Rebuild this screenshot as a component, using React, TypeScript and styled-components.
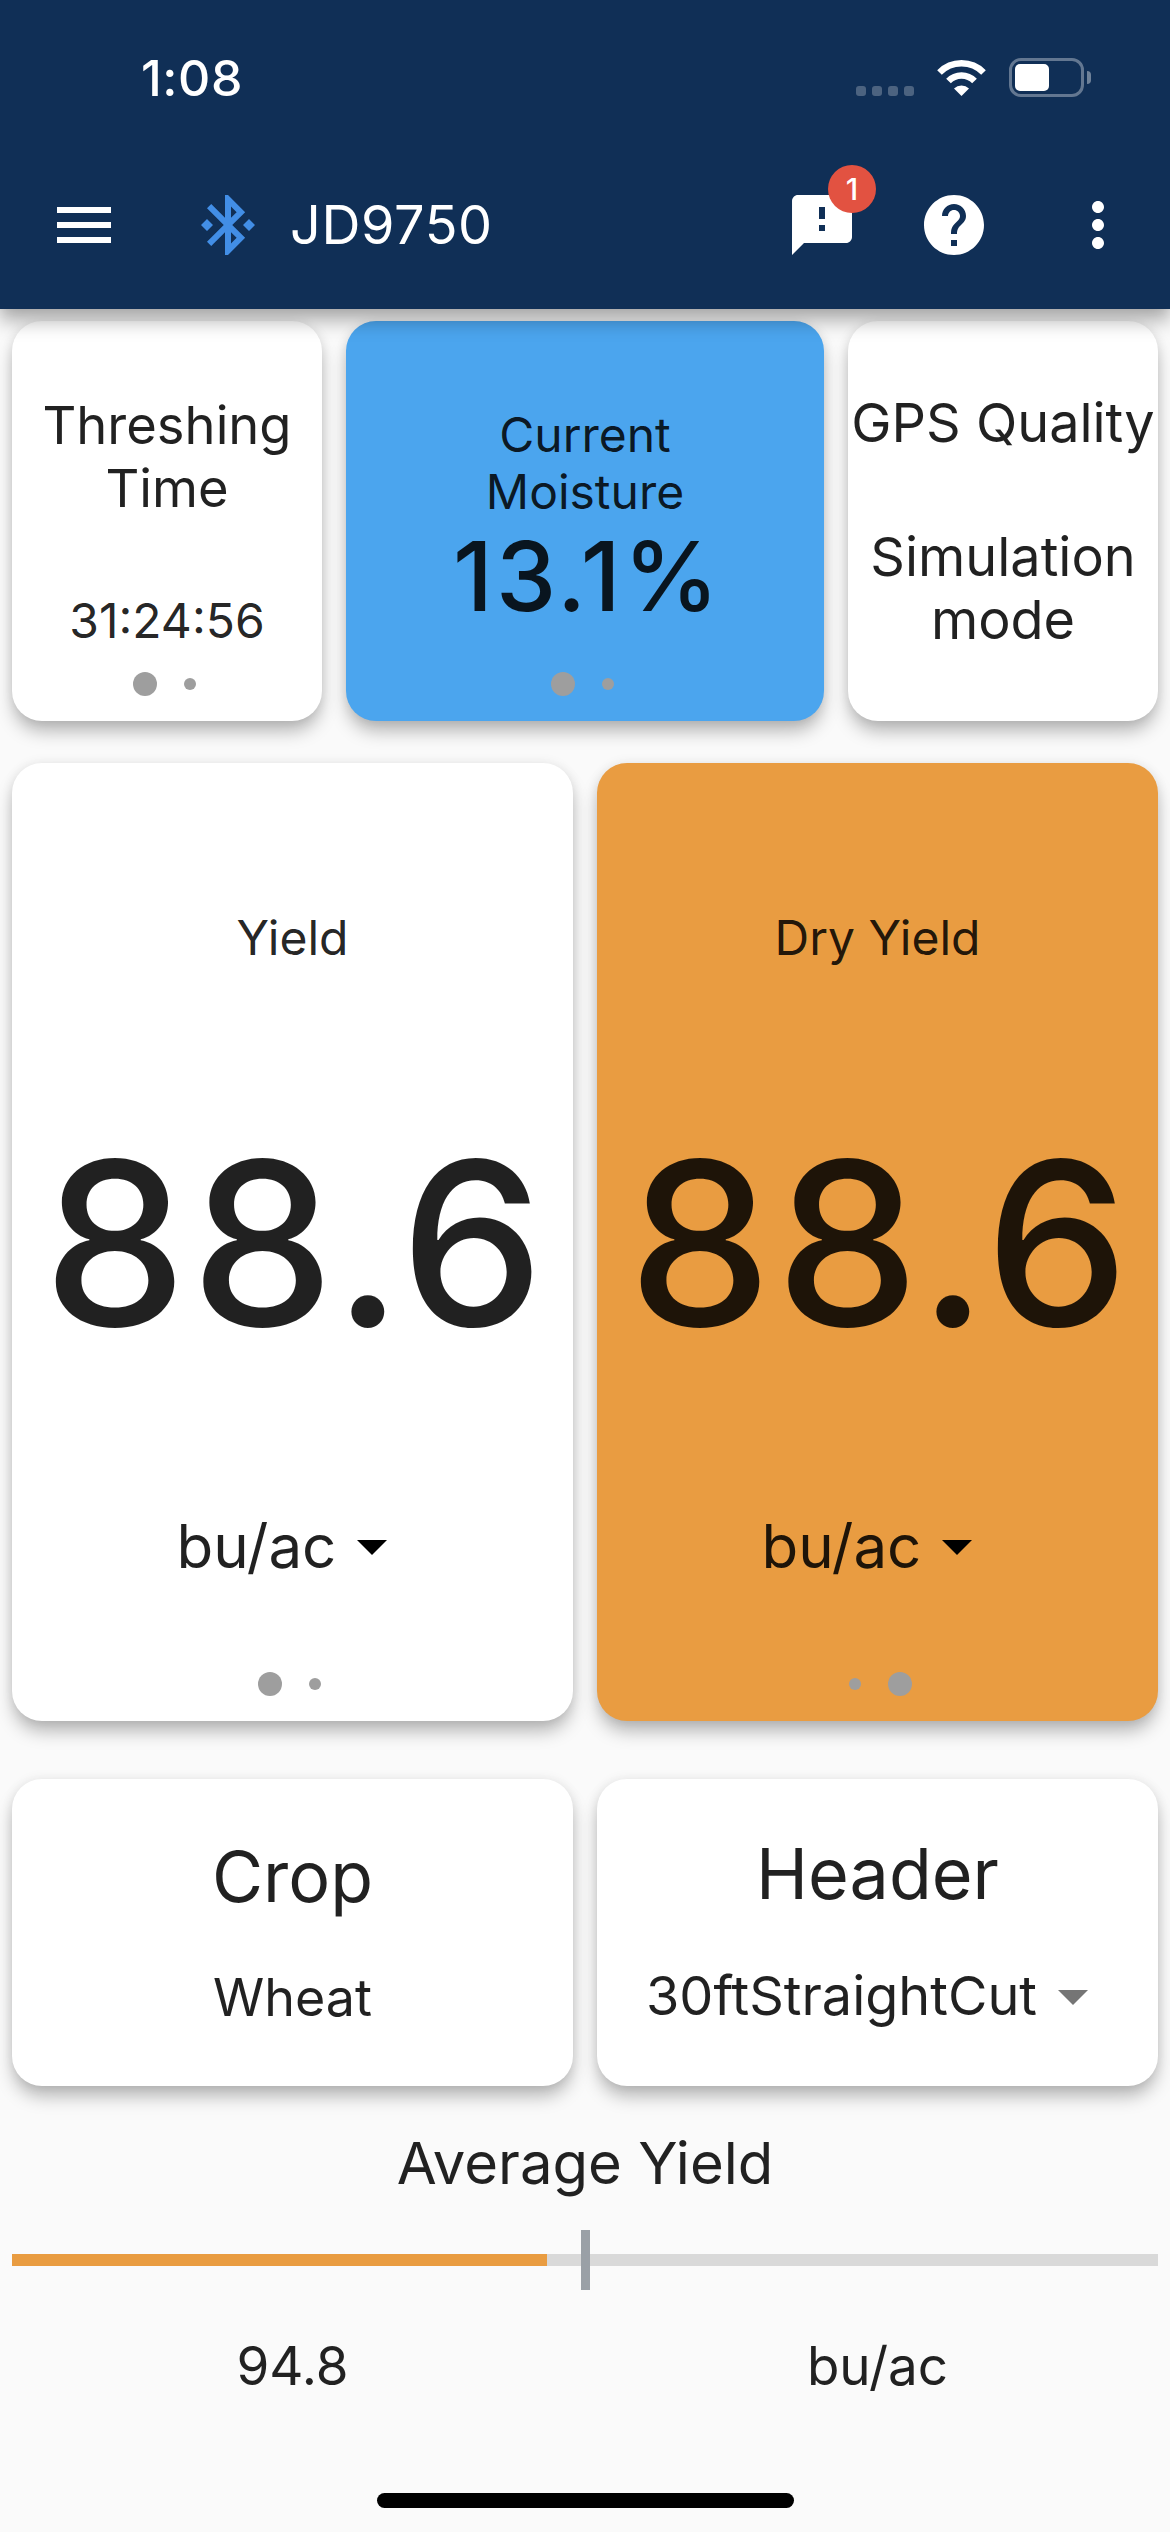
import React from "react";
import styled, { createGlobalStyle } from "styled-components";

const Global = createGlobalStyle`
  html, body { margin: 0; padding: 0; background: #fafafa; }
  body { font-family: Inter, Roboto, "Liberation Sans", sans-serif; color: rgba(0,0,0,.87); }
`;

const Page = styled.div`
  width: 1170px;
  height: 2532px;
  overflow: hidden;
  background: #fafafa;
  display: flex;
  flex-direction: column;
  position: relative;
`;

const AppBar = styled.header`
  height: 309px;
  flex: none;
  background: #102f56;
  box-shadow: 0 12px 18px rgba(0,0,0,.3), 0 0 12px rgba(0,0,0,.08);
  position: relative;
  z-index: 2;
  display: flex;
  flex-direction: column;
`;

const StatusBar = styled.div`
  height: 99px;
  padding: 0 86px 0 141px;
  display: flex;
  align-items: flex-end;
  flex: none;
  color: #fff;
`;

const Clock = styled.div`
  font-weight: 500;
  font-size: 50px;
  line-height: 42px;
  letter-spacing: 0.6px;
  margin-right: auto;
`;

const SignalDots = styled.div`
  display: flex;
  gap: 6px;
  margin-bottom: 3px;
  margin-right: 22px;
`;

const SignalDot = styled.span`
  width: 10px;
  height: 10px;
  border-radius: 3px;
  background: rgba(255,255,255,.25);
`;

const Wifi = styled.svg`
  width: 51px;
  height: 37px;
  margin-bottom: 3px;
  margin-right: 22px;
`;

const Battery = styled.div`
  width: 75px;
  height: 39px;
  box-sizing: border-box;
  border: 3px solid rgba(255,255,255,.35);
  border-radius: 12px;
  padding: 3px;
  margin-bottom: 2px;
  position: relative;
  &::after {
    content: "";
    position: absolute;
    right: -10px;
    top: 10px;
    width: 4px;
    height: 13px;
    border-radius: 0 4px 4px 0;
    background: rgba(255,255,255,.4);
  }
`;

const BatteryFill = styled.div`
  width: 34px;
  height: 100%;
  border-radius: 5px;
  background: #fff;
`;

const Toolbar = styled.div`
  margin-top: 90px;
  height: 72px;
  padding: 0 36px 0 48px;
  display: flex;
  align-items: center;
  flex: none;
  color: #fff;
`;

const Icon = styled.svg<{ $ml?: number }>`
  width: 72px;
  height: 72px;
  flex: none;
  display: block;
  fill: currentColor;
  margin-left: ${(p) => p.$ml ?? 0}px;
`;

const BrandName = styled.div`
  margin-left: 26px;
  font-size: 54px;
  line-height: 74px;
  letter-spacing: 0.6px;
  margin-right: auto;
`;

const AlertWrap = styled.div`
  position: relative;
  width: 72px;
  height: 72px;
  flex: none;
`;

const Badge = styled.span`
  position: absolute;
  left: 42px;
  top: -24px;
  width: 48px;
  height: 48px;
  border-radius: 50%;
  background: #e25241;
  color: #fff;
  font-size: 30px;
  font-weight: 500;
  line-height: 48px;
  text-align: center;
`;

const Content = styled.main`
  padding: 12px 12px 0;
  display: flex;
  flex-direction: column;
`;

const TopRow = styled.div`
  display: grid;
  grid-template-columns: 310px 1fr 310px;
  gap: 24px;
`;

const TwoCol = styled.div<{ $mt: number }>`
  display: grid;
  grid-template-columns: 1fr 1fr;
  gap: 24px;
  margin-top: ${(p) => p.$mt}px;
`;

const Card = styled.section<{ $h: number; $bg?: string; $pt: number }>`
  height: ${(p) => p.$h}px;
  box-sizing: border-box;
  padding: ${(p) => p.$pt}px 0 25px;
  border-radius: 30px;
  background: ${(p) => p.$bg ?? "#fff"};
  box-shadow: 0 12px 18px -2px rgba(0,0,0,.28), 0 0 12px rgba(0,0,0,.08);
  display: flex;
  flex-direction: column;
  align-items: center;
  text-align: center;
`;

const Text = styled.div<{ $size: number; $lh: number; $mt?: number; $ls?: number; $w?: number }>`
  font-size: ${(p) => p.$size}px;
  line-height: ${(p) => p.$lh}px;
  margin-top: ${(p) => p.$mt ?? 0}px;
  letter-spacing: ${(p) => p.$ls ?? 0}px;
  font-weight: ${(p) => p.$w ?? 400};
  white-space: pre-line;
`;

const Reading = styled(Text)`
  font-weight: 500;
  padding-left: ${(p) => (p.$ls ?? 0) + 2}px;
`;

const Dots = styled.div`
  margin-top: auto;
  height: 24px;
  display: flex;
  justify-content: center;
  align-items: center;
`;

const DotSlot = styled.div`
  width: 45px;
  display: flex;
  justify-content: center;
`;

const Dot = styled.span<{ $active?: boolean }>`
  width: ${(p) => (p.$active ? 24 : 12)}px;
  height: ${(p) => (p.$active ? 24 : 12)}px;
  border-radius: 50%;
  background: #9e9e9e;
`;

const Unit = styled.div<{ $mt: number }>`
  margin-top: ${(p) => p.$mt}px;
  height: 72px;
  display: flex;
  align-items: center;
  color: inherit;
`;

const ArrowIcon = styled.svg<{ $muted?: boolean }>`
  width: 72px;
  height: 72px;
  flex: none;
  fill: ${(p) => (p.$muted ? "#757575" : "#000")};
`;

const Slider = styled.div`
  margin-top: 34px;
  height: 60px;
  position: relative;
  display: flex;
  align-items: center;
`;

const Track = styled.div`
  width: 100%;
  height: 12px;
  background: #d9d9d9;
`;

const TrackFill = styled.div`
  height: 100%;
  background: #e99c41;
`;

const Marker = styled.div`
  position: absolute;
  left: 569px;
  top: 0;
  width: 9px;
  height: 60px;
  background: #9aa0a6;
`;

const Values = styled.div`
  display: grid;
  grid-template-columns: 1fr 1fr;
  gap: 24px;
  text-align: center;
  margin-top: 45px;
`;

const HomeBar = styled.div`
  position: absolute;
  left: 377px;
  top: 2493px;
  width: 417px;
  height: 15px;
  border-radius: 8px;
  background: #000;
`;

const PageDots = ({ active }: { active: 0 | 1 }) => (
  <Dots>
    <DotSlot><Dot $active={active === 0} /></DotSlot>
    <DotSlot><Dot $active={active === 1} /></DotSlot>
  </Dots>
);

const Arrow = ({ muted }: { muted?: boolean }) => (
  <ArrowIcon viewBox="0 0 24 24" $muted={muted}><path d="M7 10l5 5 5-5z" /></ArrowIcon>
);

const YieldCard = ({ title, bg, active }: { title: string; bg?: string; active: 0 | 1 }) => (
  <Card $h={958} $bg={bg} $pt={145}>
    <Text $size={48} $lh={60}>{title}</Text>
    <Reading $size={228} $lh={280} $mt={135} $ls={4}>88.6</Reading>
    <Unit $mt={127}>
      <Text $size={60} $lh={72}>bu/ac</Text>
      <Arrow />
    </Unit>
    <PageDots active={active} />
  </Card>
);

export default function App() {
  return (
    <Page>
      <Global />
      <AppBar>
        <StatusBar>
          <Clock>1:08</Clock>
          <SignalDots>
            <SignalDot /><SignalDot /><SignalDot /><SignalDot />
          </SignalDots>
          <Wifi viewBox="0 0 51 37" fill="none" stroke="#fff">
            <path d="M3.5 13.5 A31 31 0 0 1 47.5 13.5" strokeWidth="6.5" />
            <path d="M12.5 22 A18 18 0 0 1 38.5 22" strokeWidth="6.5" />
            <path d="M25.5 37 L18 29.5 A11 11 0 0 1 33 29.5 Z" fill="#fff" stroke="none" />
          </Wifi>
          <Battery><BatteryFill /></Battery>
        </StatusBar>
        <Toolbar>
          <Icon viewBox="0 0 24 24"><path d="M3 18h18v-2H3v2zm0-5h18v-2H3v2zm0-7v2h18V6H3z" /></Icon>
          <Icon viewBox="0 0 24 24" $ml={72} style={{ color: "#428ee6" }}>
            <path d="M7 12l-2-2-2 2 2 2 2-2zm10.71-4.29L12 2h-1v7.59L6.41 5 5 6.41 10.59 12 5 17.59 6.41 19 11 14.41V22h1l5.71-5.71-4.3-4.29 4.3-4.29zM13 5.83l1.88 1.88L13 9.59V5.83zm1.88 10.46L13 18.17v-3.76l1.88 1.88zM19 10l-2 2 2 2 2-2-2-2z" />
          </Icon>
          <BrandName>JD9750</BrandName>
          <AlertWrap>
            <Icon viewBox="0 0 24 24"><path d="M20 2H4c-1.1 0-1.99.9-1.99 2L2 22l4-4h14c1.1 0 2-.9 2-2V4c0-1.1-.9-2-2-2zm-7 12h-2v-2h2v2zm0-4h-2V6h2v4z" /></Icon>
            <Badge>1</Badge>
          </AlertWrap>
          <Icon viewBox="0 0 24 24" $ml={60}><path d="M12 2C6.48 2 2 6.48 2 12s4.48 10 10 10 10-4.48 10-10S17.52 2 12 2zm1 17h-2v-2h2v2zm2.07-7.75l-.9.92C13.45 12.9 13 13.5 13 15h-2v-.5c0-1.1.45-2.1 1.17-2.83l1.24-1.26c.37-.36.59-.86.59-1.41 0-1.1-.9-2-2-2s-2 .9-2 2H8c0-2.21 1.79-4 4-4s4 1.79 4 4c0 .88-.36 1.68-.93 2.25z" /></Icon>
          <Icon viewBox="0 0 24 24" $ml={72}><path d="M12 8c1.1 0 2-.9 2-2s-.9-2-2-2-2 .9-2 2 .9 2 2 2zm0 2c-1.1 0-2 .9-2 2s.9 2 2 2 2-.9 2-2-.9-2-2-2zm0 6c-1.1 0-2 .9-2 2s.9 2 2 2 2-.9 2-2-.9-2-2-2z" /></Icon>
        </Toolbar>
      </AppBar>
      <Content>
        <TopRow>
          <Card $h={400} $pt={73}>
            <Text $size={52.5} $lh={63}>{"Threshing\nTime"}</Text>
            <Text $size={48} $lh={60} $mt={71}>31:24:56</Text>
            <PageDots active={0} />
          </Card>
          <Card $h={400} $pt={85} $bg="#4ba5ee">
            <Text $size={48} $lh={57}>{"Current\nMoisture"}</Text>
            <Reading $size={96} $lh={112} $ls={3}>13.1%</Reading>
            <PageDots active={0} />
          </Card>
          <Card $h={400} $pt={70}>
            <Text $size={54} $lh={63}>GPS Quality</Text>
            <Text $size={54} $lh={63} $mt={71}>{"Simulation\nmode"}</Text>
          </Card>
        </TopRow>
        <TwoCol $mt={42}>
          <YieldCard title="Yield" active={0} />
          <YieldCard title="Dry Yield" bg="#e99c41" active={1} />
        </TwoCol>
        <TwoCol $mt={58}>
          <Card $h={307} $pt={55}>
            <Text $size={70} $lh={86}>Crop</Text>
            <Text $size={52} $lh={64} $mt={46}>Wheat</Text>
          </Card>
          <Card $h={307} $pt={52}>
            <Text $size={70} $lh={86}>Header</Text>
            <Unit $mt={43}>
              <Text $size={54} $lh={64}>30ftStraightCut</Text>
              <Arrow muted />
            </Unit>
          </Card>
        </TwoCol>
        <Text $size={58} $lh={66} $mt={44} style={{ textAlign: "center" }}>Average Yield</Text>
        <Slider>
          <Track><TrackFill style={{ width: `${(535 / 1146) * 100}%` }} /></Track>
          <Marker />
        </Slider>
        <Values>
          <Text $size={53} $lh={62}>94.8</Text>
          <Text $size={53} $lh={62}>bu/ac</Text>
        </Values>
      </Content>
      <HomeBar />
    </Page>
  );
}
